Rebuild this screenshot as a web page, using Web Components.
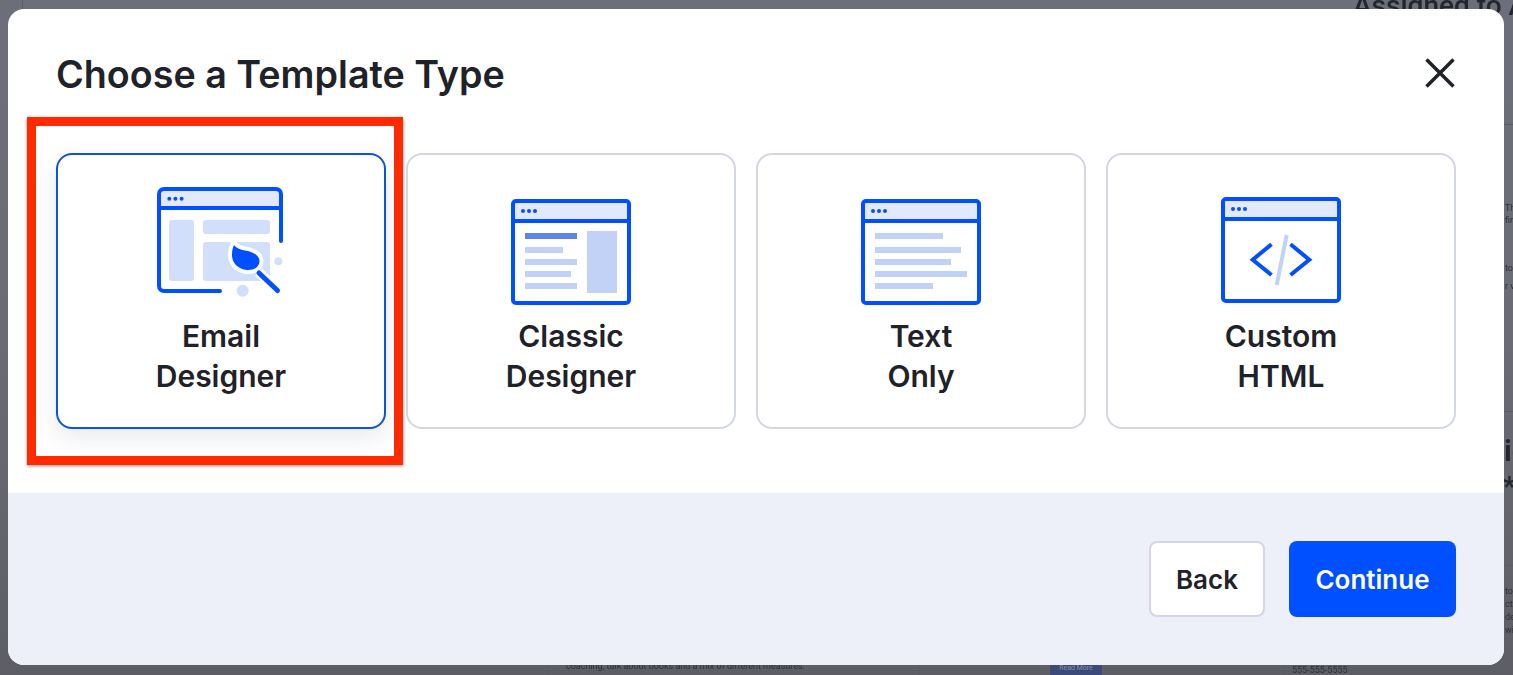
<!DOCTYPE html>
<html lang="en">
<head>
<meta charset="utf-8">
<title>Choose a Template Type</title>
<style>
  html, body { margin: 0; height: 100%; overflow: hidden; }
  body { font-family: Inter, Roboto, "Liberation Sans", sans-serif; color: #1f2229; }
</style>
</head>
<body>
<template-screen>
  <template-dialog heading="Choose a Template Type">
    <template-card selected>
      <svg slot="icon" width="160" height="130" viewBox="0 0 160 130" fill="none">
        <rect x="18" y="9" width="122" height="19" fill="#e3e9fc"/>
        <rect x="28" y="40" width="25" height="61" rx="3" fill="#d2dffb"/>
        <rect x="62" y="40" width="67" height="14" rx="3" fill="#d2dffb"/>
        <rect x="62" y="62" width="67" height="39" rx="3" fill="#d2dffb"/>
        <circle cx="137.300" cy="81.300" r="4" fill="#d2dffb"/>
        <circle cx="101.700" cy="110.700" r="6" fill="#d2dffb"/>
        <path d="M79 111H23a5 5 0 0 1-5-5V14a5 5 0 0 1 5-5h112a5 5 0 0 1 5 5v47" stroke="#0050ff" stroke-width="4" stroke-linecap="round"/>
        <path d="M18 28h122" stroke="#0050ff" stroke-width="4"/>
        <circle cx="28.300" cy="18.700" r="2" fill="#0050ff"/><circle cx="34.400" cy="18.700" r="2" fill="#0050ff"/><circle cx="40.600" cy="18.700" r="2" fill="#0050ff"/>
        <path d="M117.500 92 136.500 110.500" stroke="#fff" stroke-width="10"/>
        <path d="M93 65C95 68 99 69.500 104 70.500 111 71.500 118.500 75 118.500 81 118.500 87 113 90.500 106 90 96 89 90.500 82 91 74 91 70 92 67 93 65Z" stroke="#fff" stroke-width="8" stroke-linejoin="round"/>
        <path d="M93 65C95 68 99 69.500 104 70.500 111 71.500 118.500 75 118.500 81 118.500 87 113 90.500 106 90 96 89 90.500 82 91 74 91 70 92 67 93 65Z" fill="#0050ff"/>
        <path d="M118 93 136.500 110.500" stroke="#0050ff" stroke-width="5" stroke-linecap="round"/>
      </svg>
      Email<br>Designer
    </template-card>
    <template-card>
      <svg slot="icon" width="160" height="130" viewBox="0 0 160 130" fill="none">
        <rect x="22" y="21" width="116" height="20" fill="#e3e9fc"/>
        <rect x="34" y="53" width="52" height="6" fill="#5c85ea"/>
        <rect x="34" y="67" width="38" height="6" fill="#c2d2f6"/>
        <rect x="34" y="79" width="52" height="6" fill="#c2d2f6"/>
        <rect x="34" y="91" width="46" height="6" fill="#c2d2f6"/>
        <rect x="34" y="103" width="52" height="6" fill="#c2d2f6"/>
        <rect x="96" y="51" width="30" height="62" fill="#c2d2f6"/>
        <rect x="22" y="21" width="116" height="102" rx="3" stroke="#0050ff" stroke-width="4"/>
        <path d="M22 41h116" stroke="#0050ff" stroke-width="4"/>
        <circle cx="32" cy="31" r="2" fill="#0050ff"/><circle cx="38" cy="31" r="2" fill="#0050ff"/><circle cx="44" cy="31" r="2" fill="#0050ff"/>
      </svg>
      Classic<br>Designer
    </template-card>
    <template-card>
      <svg slot="icon" width="160" height="130" viewBox="0 0 160 130" fill="none">
        <rect x="22" y="21" width="116" height="20" fill="#e3e9fc"/>
        <rect x="34" y="53" width="68" height="6" fill="#c2d2f6"/>
        <rect x="34" y="67" width="86" height="6" fill="#c2d2f6"/>
        <rect x="34" y="79" width="76" height="6" fill="#c2d2f6"/>
        <rect x="34" y="91" width="92" height="6" fill="#c2d2f6"/>
        <rect x="34" y="103" width="58" height="6" fill="#c2d2f6"/>
        <rect x="22" y="21" width="116" height="102" rx="3" stroke="#0050ff" stroke-width="4"/>
        <path d="M22 41h116" stroke="#0050ff" stroke-width="4"/>
        <circle cx="32" cy="31" r="2" fill="#0050ff"/><circle cx="38" cy="31" r="2" fill="#0050ff"/><circle cx="44" cy="31" r="2" fill="#0050ff"/>
      </svg>
      Text<br>Only
    </template-card>
    <template-card>
      <svg slot="icon" width="160" height="130" viewBox="0 0 160 130" fill="none">
        <rect x="22" y="19" width="116" height="20" fill="#e3e9fc"/>
        <path d="M85.700 55 75.700 105" stroke="#c2d2f6" stroke-width="4"/>
        <path d="M70.500 64.300 51.700 79.700 70.500 95M89.500 64.300 108.300 79.700 89.500 95" stroke="#0050ff" stroke-width="4"/>
        <rect x="22" y="19" width="116" height="102" rx="3" stroke="#0050ff" stroke-width="4"/>
        <path d="M22 39h116" stroke="#0050ff" stroke-width="4"/>
        <circle cx="32" cy="29" r="2" fill="#0050ff"/><circle cx="38" cy="29" r="2" fill="#0050ff"/><circle cx="44" cy="29" r="2" fill="#0050ff"/>
      </svg>
      Custom<br>HTML
    </template-card>
  </template-dialog>
</template-screen>

<script>
// Dimmed app page behind the dialog
class TemplateScreen extends HTMLElement {
    constructor() {
        super();
        this.attachShadow({ mode: 'open' });
        this.shadowRoot.innerHTML = `
            <style>
                :host {
                    display: flex;
                    position: relative;
                    box-sizing: border-box;
                    width: 100%;
                    height: 100vh;
                    padding: 9px 9px 10px 8px;
                    overflow: hidden;
                    background: linear-gradient(#6c6e79, #6a6b75 50%, #5d5e65);
                }
                .behind {
                    position: absolute;
                    color: #24262e;
                    white-space: nowrap;
                    filter: blur(.4px);
                    font-family: Roboto, "Liberation Sans", sans-serif;
                }
                .small { font-size: 9px; line-height: 12px; color: #2e3038; }
                .rule { position: absolute; background: #5a5b63; }
                ::slotted(*) { position: relative; }
            </style>
            <div class="rule" style="left:22px;top:0;width:1px;height:9px"></div>
            <div class="rule" style="left:1504px;top:124px;width:9px;height:1px"></div>
            <div class="rule" style="left:1504px;top:411px;width:9px;height:1px"></div>
            <div class="rule" style="left:1504px;top:565px;width:9px;height:1px"></div>
            <div class="rule" style="left:547px;top:665px;width:1px;height:10px"></div>
            <div class="rule" style="left:861px;top:665px;width:1px;height:10px"></div>
            <div class="rule" style="left:919px;top:665px;width:1px;height:10px"></div>
            <div class="rule" style="left:1283px;top:665px;width:1px;height:10px"></div>
            <div class="behind" style="left:1353px;top:-11px;font-size:28px;font-weight:500">Assigned to A</div>
            <div class="behind small" style="left:1505px;top:202px">Th<br>firs</div>
            <div class="behind small" style="left:1505px;top:262px">tor</div>
            <div class="behind small" style="left:1505px;top:280px">r v</div>
            <div class="behind" style="left:1504px;top:433px;font-size:30px;font-weight:600">ig</div>
            <div class="behind" style="left:1503px;top:470px;font-size:28px;font-weight:600">*</div>
            <div class="behind small" style="left:1505px;top:585px;line-height:13px">to r<br>cti<br>de<br>wi</div>
            <div class="behind small" style="left:566px;top:660px">coaching, talk about books and a mix of different measures.</div>
            <div class="behind" style="left:1050px;top:663px;width:52px;height:14px;background:#3b4a78;border-radius:2px;color:#8a90a8;font-size:7px;line-height:10px;text-align:center">Read More</div>
            <div class="behind small" style="left:1292px;top:664px">555-555-5555</div>
            <slot></slot>
        `;
    }
}

// Modal with heading, close button, options row and footer actions
class TemplateDialog extends HTMLElement {
    constructor() {
        super();
        this.attachShadow({ mode: 'open' });
    }

    connectedCallback() {
        this.shadowRoot.innerHTML = `
            <style>
                :host {
                    display: flex;
                    flex-direction: column;
                    flex: 1;
                    min-width: 0;
                    background: #fff;
                    border-radius: 16px;
                    overflow: hidden;
                }
                .body { flex: 1; padding: 0 48px; }
                header {
                    display: flex;
                    align-items: center;
                    justify-content: space-between;
                    height: 144px;
                    padding-bottom: 16px;
                    box-sizing: border-box;
                    padding-top: 2px;
                }
                h2 { margin: 0; font-size: 37.700px; line-height: 48px; font-weight: 600; color: #1f2229; }
                .close { display: flex; padding: 0; margin-bottom: 2px; border: 0; background: none; }
                .options { display: grid; grid-template-columns: 330px 330px 330px 350px; gap: 20px; }
                footer {
                    display: flex;
                    justify-content: flex-end;
                    gap: 24px;
                    height: 172px;
                    box-sizing: border-box;
                    padding: 48px;
                    background: #edf0f9;
                }
                button.action {
                    height: 76px;
                    box-sizing: border-box;
                    border-radius: 8px;
                    font: 600 26px Inter, Roboto, "Liberation Sans", sans-serif;
                }
                .back { width: 116px; background: #fff; border: 2px solid #d3d6e3; color: #1f2229; }
                .next { width: 167px; background: #0050ff; border: 0; color: #fff; }
            </style>
            <div class="body">
                <header>
                    <h2>${this.getAttribute('heading')}</h2>
                    <button class="close" aria-label="Close">
                        <svg width="32" height="32" viewBox="0 0 32 32" fill="none" stroke="#1f2229" stroke-width="3.500">
                            <path d="M2.500 2.500 29.500 29.500M29.500 2.500 2.500 29.500"/>
                        </svg>
                    </button>
                </header>
                <div class="options"><slot></slot></div>
            </div>
            <footer>
                <button class="action back">Back</button>
                <button class="action next">Continue</button>
            </footer>
        `;
    }
}

// One template type option
class TemplateCard extends HTMLElement {
    constructor() {
        super();
        this.attachShadow({ mode: 'open' });
        this.shadowRoot.innerHTML = `
            <style>
                :host {
                    display: flex;
                    flex-direction: column;
                    align-items: center;
                    position: relative;
                    box-sizing: border-box;
                    height: 276px;
                    padding-top: 25px;
                    border: 2px solid #d3d6e3;
                    border-radius: 16px;
                    background: #fff;
                    text-align: center;
                    font-size: 30px;
                    line-height: 40px;
                    font-weight: 600;
                    color: #1f2229;
                }
                :host([selected]) {
                    border-color: #0f52e0;
                    box-shadow: 0 8px 24px rgba(30, 40, 80, .1);
                }
                /* red annotation frame drawn over the screenshot */
                :host([selected])::after {
                    content: "";
                    position: absolute;
                    left: -31px;
                    right: -19px;
                    top: -38px;
                    bottom: -38px;
                    border: 9px solid #ff2a00;
                    box-shadow: 0 1px 3px rgba(0, 0, 0, .45);
                    pointer-events: none;
                }
                .icon { display: flex; height: 130px; margin-bottom: 6px; }
            </style>
            <div class="icon"><slot name="icon"></slot></div>
            <div><slot></slot></div>
        `;
    }
}

customElements.define('template-screen', TemplateScreen);
customElements.define('template-dialog', TemplateDialog);
customElements.define('template-card', TemplateCard);
</script>
</body>
</html>
